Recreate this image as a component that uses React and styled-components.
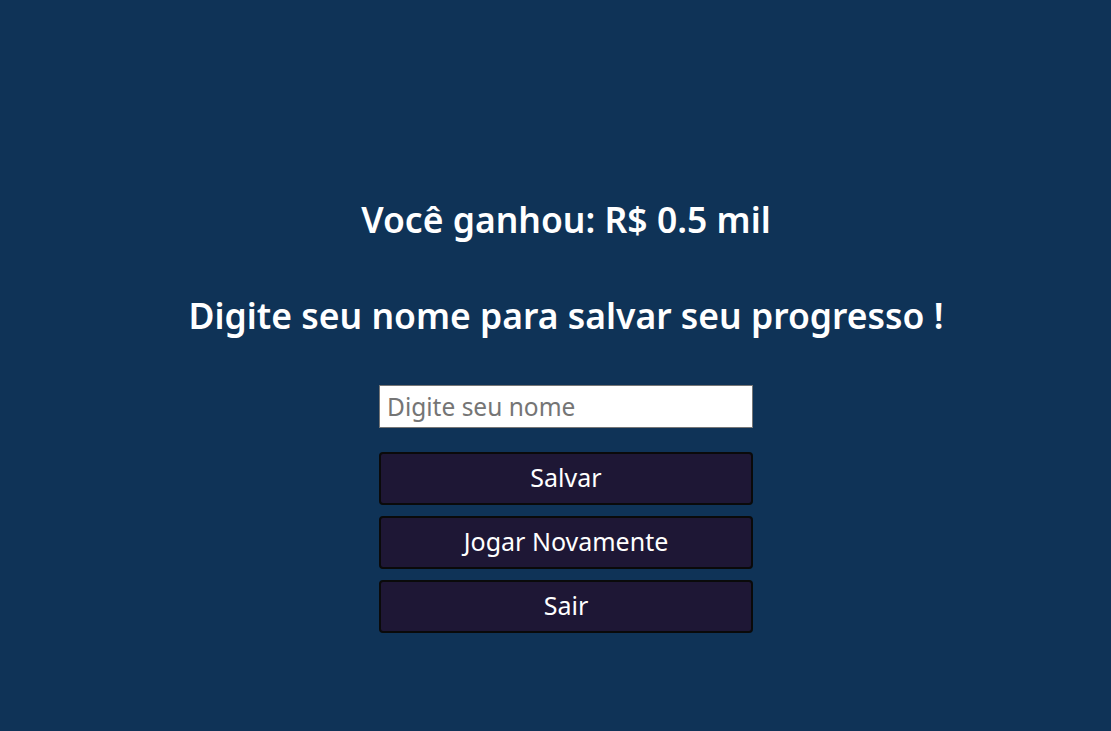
import styled, { createGlobalStyle } from "styled-components";

const GlobalStyle = createGlobalStyle`
  * {
    box-sizing: border-box;
  }
  body {
    margin: 0;
    background-color: #0f3357;
    font-family: "Noto Sans", "Open Sans", sans-serif;
  }
`;

export default function App() {
  return (
    <>
      <GlobalStyle />
      <Main>
        <Title>Você ganhou: R$ 0.5 mil</Title>
        <Title>Digite seu nome para salvar seu progresso !</Title>
        <Form onSubmit={(e) => e.preventDefault()}>
          <Input type="text" placeholder="Digite seu nome" />
          <Button type="submit">Salvar</Button>
          <Button type="button">Jogar Novamente</Button>
          <Button type="button">Sair</Button>
        </Form>
      </Main>
    </>
  );
}

const Main = styled.main`
  min-height: 100vh;
  width: 100%;
  background-color: #0f3357;
  display: flex;
  flex-direction: column;
  align-items: center;
  padding: 197px 0 0 21px;
  color: #fff;
`;

const Title = styled.h2`
  font-size: 35.5px;
  font-weight: 600;
  margin: 0 0 52px;
  line-height: 44px;
  text-align: center;
`;

const Form = styled.form`
  width: 374px;
  display: flex;
  flex-direction: column;
  gap: 11px;
  margin-top: -4px;
`;

const Input = styled.input`
  width: 100%;
  height: 43px;
  border: 1px solid #767676;
  background: #fff;
  padding: 0 7px;
  font-family: inherit;
  font-size: 24.5px;
  color: #222;
  margin-bottom: 13px;
  &::placeholder {
    color: #757575;
  }
`;

const Button = styled.button`
  width: 100%;
  height: 53px;
  background-color: #1e1735;
  border: 2px solid #0a0a0a;
  border-radius: 4px;
  color: #fff;
  font-family: inherit;
  font-size: 25px;
  line-height: 1;
  padding: 0 0 2px;
  cursor: pointer;
`;
